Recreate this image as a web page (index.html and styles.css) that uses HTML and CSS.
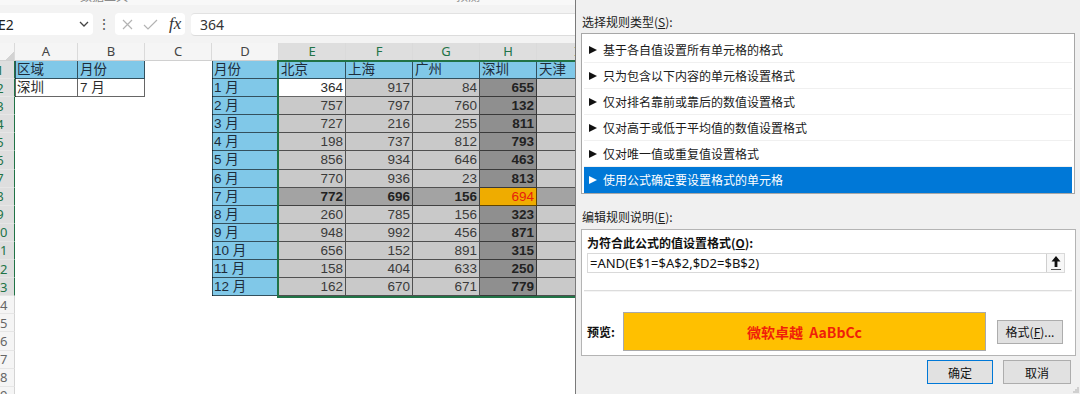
FILE: index.html
```html
<!DOCTYPE html>
<html>
<head>
	<meta charset="utf-8">
	<title>新建格式规则</title>
	<link rel="stylesheet" href="styles.css">
</head>
<body>
	<!-- Worksheet -->
	<div class="excel">
		<div class="ribbon"><span class="rb-a">数据工具</span><span class="rb-b">预测</span></div>

		<!-- Formula bar -->
		<div class="fbar">
			<div class="namebox">
				<span>E2</span>
				<svg width="10" height="6" viewBox="0 0 10 6"><polyline points="1,1 5,5 9,1" fill="none" stroke="#444" stroke-width="1.3"/></svg>
			</div>
			<div class="dots">⋮</div>
			<div class="fbtns">
				<svg width="11" height="11" viewBox="0 0 11 11"><path d="M1 1L10 10M10 1L1 10" stroke="#b3b3b3" stroke-width="1.2"/></svg>
				<svg width="15" height="11" viewBox="0 0 15 11"><polyline points="1,6 5,10 14,1" fill="none" stroke="#b3b3b3" stroke-width="1.2"/></svg>
				<span class="fx">fx</span>
			</div>
			<div class="finput">364</div>
		</div>

		<!-- Grid -->
		<div class="sheet">
			<div class="colhead">
				<div class="ch corner"></div>
				<div class="ch">A</div>
				<div class="ch">B</div>
				<div class="ch">C</div>
				<div class="ch">D</div>
				<div class="ch on">E</div>
				<div class="ch on">F</div>
				<div class="ch on">G</div>
				<div class="ch on">H</div>
				<div class="ch on">I</div>
			</div>

			<div class="row sel"><div class="rh"><span>1</span></div><div class="c t bl lt">区域</div><div class="c t bl">月份</div><div class="c"></div><div class="c t bl lt">月份</div><div class="c t bl">北京</div><div class="c t bl">上海</div><div class="c t bl">广州</div><div class="c t bl">深圳</div><div class="c t bl">天津</div></div>
			<div class="row sel"><div class="rh"><span>2</span></div><div class="c t w lt">深圳</div><div class="c t w">7 月</div><div class="c"></div><div class="c t bl lt">1 月</div><div class="c t w n">364</div><div class="c t g n">917</div><div class="c t g n">84</div><div class="c t hh n">655</div><div class="c t g"></div></div>
			<div class="row sel"><div class="rh"><span>3</span></div><div class="c t bl d">2 月</div><div class="c t g n">757</div><div class="c t g n">797</div><div class="c t g n">760</div><div class="c t hh n">132</div><div class="c t g"></div></div>
			<div class="row sel"><div class="rh"><span>4</span></div><div class="c t bl d">3 月</div><div class="c t g n">727</div><div class="c t g n">216</div><div class="c t g n">255</div><div class="c t hh n">811</div><div class="c t g"></div></div>
			<div class="row sel"><div class="rh"><span>5</span></div><div class="c t bl d">4 月</div><div class="c t g n">198</div><div class="c t g n">737</div><div class="c t g n">812</div><div class="c t hh n">793</div><div class="c t g"></div></div>
			<div class="row sel"><div class="rh"><span>6</span></div><div class="c t bl d">5 月</div><div class="c t g n">856</div><div class="c t g n">934</div><div class="c t g n">646</div><div class="c t hh n">463</div><div class="c t g"></div></div>
			<div class="row sel"><div class="rh"><span>7</span></div><div class="c t bl d">6 月</div><div class="c t g n">770</div><div class="c t g n">936</div><div class="c t g n">23</div><div class="c t hh n">813</div><div class="c t g"></div></div>
			<div class="row sel"><div class="rh"><span>8</span></div><div class="c t bl d">7 月</div><div class="c t b7 n">772</div><div class="c t b7 n">696</div><div class="c t b7 n">156</div><div class="c t hit n">694</div><div class="c t b7"></div></div>
			<div class="row sel"><div class="rh"><span>9</span></div><div class="c t bl d">8 月</div><div class="c t g n">260</div><div class="c t g n">785</div><div class="c t g n">156</div><div class="c t hh n">323</div><div class="c t g"></div></div>
			<div class="row sel"><div class="rh"><span>10</span></div><div class="c t bl d">9 月</div><div class="c t g n">948</div><div class="c t g n">992</div><div class="c t g n">456</div><div class="c t hh n">871</div><div class="c t g"></div></div>
			<div class="row sel"><div class="rh"><span>11</span></div><div class="c t bl d">10 月</div><div class="c t g n">656</div><div class="c t g n">152</div><div class="c t g n">891</div><div class="c t hh n">315</div><div class="c t g"></div></div>
			<div class="row sel"><div class="rh"><span>12</span></div><div class="c t bl d">11 月</div><div class="c t g n">158</div><div class="c t g n">404</div><div class="c t g n">633</div><div class="c t hh n">250</div><div class="c t g"></div></div>
			<div class="row sel"><div class="rh"><span>13</span></div><div class="c t bl d">12 月</div><div class="c t g n">162</div><div class="c t g n">670</div><div class="c t g n">671</div><div class="c t hh n">779</div><div class="c t g"></div></div>
			<div class="row"><div class="rh"><span>14</span></div></div>
			<div class="row"><div class="rh"><span>15</span></div></div>
			<div class="row"><div class="rh"><span>16</span></div></div>
			<div class="row"><div class="rh"><span>17</span></div></div>
			<div class="row"><div class="rh"><span>18</span></div></div>
			<div class="row"><div class="rh"><span>19</span></div></div>

			<!-- selected range E1:I13 -->
			<div class="selection"></div>
		</div>
	</div>

	<!-- Conditional format dialog -->
	<div class="dialog">
		<div class="lbl">选择规则类型(<u>S</u>):</div>
		<div class="rules">
			<div class="rule">基于各自值设置所有单元格的格式</div>
			<div class="rule">只为包含以下内容的单元格设置格式</div>
			<div class="rule">仅对排名靠前或靠后的数值设置格式</div>
			<div class="rule">仅对高于或低于平均值的数值设置格式</div>
			<div class="rule">仅对唯一值或重复值设置格式</div>
			<div class="rule on">使用公式确定要设置格式的单元格</div>
		</div>

		<div class="lbl lbl2">编辑规则说明(<u>E</u>):</div>
		<div class="desc">
			<div class="desc-title">为符合此公式的值设置格式(<u>O</u>):</div>
			<div class="formula">
				<span>=AND(E$1=$A$2,$D2=$B$2)</span>
				<div class="up">
					<svg width="12" height="16" viewBox="0 0 12 16"><path d="M6 1L1.5 6.5H4.6V12H7.4V6.5H10.5Z" fill="#111"/><rect x="1" y="14" width="10" height="1" fill="#555"/></svg>
				</div>
			</div>
			<div class="sep"></div>
			<div class="preview-row">
				<div class="pv-label">预览:</div>
				<div class="pv-box">微软卓越&nbsp;&nbsp;AaBbCc</div>
				<div class="btn fmt-btn">格式(<u>F</u>)...</div>
			</div>
		</div>

		<div class="actions">
			<div class="btn ok">确定</div>
			<div class="btn cancel">取消</div>
		</div>

		<svg class="grip" width="8" height="8" viewBox="0 0 8 8">
			<circle cx="7" cy="3" r="0.7" fill="#999"/>
			<circle cx="5" cy="5" r="0.7" fill="#999"/>
			<circle cx="7" cy="5" r="0.7" fill="#999"/>
			<circle cx="3" cy="7" r="0.7" fill="#999"/>
			<circle cx="5" cy="7" r="0.7" fill="#999"/>
			<circle cx="7" cy="7" r="0.7" fill="#999"/>
		</svg>
	</div>
</body>
</html>
```

FILE: styles.css
```css
* {
	box-sizing: border-box;
}

body {
	margin: 0;
	width: 1080px;
	height: 394px;
	overflow: hidden;
	display: flex;
	background-color: #fff;
	font-family: "Noto Sans", "Noto Sans CJK SC", sans-serif;
}

/* ---------- worksheet ---------- */

.excel {
	width: 575px;
	flex: none;
	overflow: hidden;
}

.ribbon {
	height: 5px;
	background-color: #f8f8f8;
	overflow: hidden;
	display: flex;
	padding-left: 80px;
	font-size: 12px;
	color: #8a8a8a;
}

.ribbon span {
	line-height: 12px;
	margin-top: -9px;
}

.ribbon .rb-b {
	margin-left: 328px;
}

.fbar {
	height: 38px;
	background-color: #f3f3f3;
	display: flex;
	align-items: flex-start;
	padding-top: 8px;
}

.namebox {
	width: 99px;
	height: 22px;
	margin-left: -6px;
	padding: 0 4px 0 4px;
	background-color: #fff;
	border-radius: 4px;
	display: flex;
	align-items: center;
	justify-content: space-between;
	font-size: 14px;
	color: #222;
}

.dots {
	width: 22px;
	height: 22px;
	line-height: 22px;
	text-align: center;
	font-size: 14px;
	color: #555;
}

.fbtns {
	width: 70px;
	height: 22px;
	background-color: #fff;
	border-radius: 4px;
	display: flex;
	align-items: center;
	padding-left: 7px;
	gap: 10px;
}

.fx {
	font-family: "Liberation Serif", serif;
	font-style: italic;
	font-size: 17px;
	color: #333;
	margin-left: 1px;
}

.finput {
	flex: 1;
	height: 23px;
	margin-left: 6px;
	padding-left: 9px;
	background-color: #fff;
	border-top: 1px solid #e2e2e2;
	border-bottom: 1px solid #dcdcdc;
	border-radius: 4px 0 0 4px;
	font-size: 14px;
	line-height: 21px;
	color: #333;
}

.sheet {
	position: relative;
}

.colhead,
.row {
	display: grid;
	grid-template-columns: 15px 63px 67px 67px 67px 67px 67px 67px 57px 80px;
}

.colhead {
	height: 18px;
}

.ch {
	background-color: #f5f5f5;
	border-right: 1px solid #dadada;
	border-bottom: 1px solid #d0d0d0;
	text-align: center;
	font-size: 13px;
	line-height: 17px;
	color: #444;
}

.ch.on {
	background-color: #dedede;
	color: #217346;
}

.corner {
	background: linear-gradient(135deg, #f5f5f5 60%, #d3d3d3 60%) no-repeat right bottom / 10px 10px, #f5f5f5;
}

.row {
	height: 18.1px;
}

.rh {
	display: flex;
	justify-content: flex-end;
	align-items: center;
	overflow: hidden;
	background-color: #f5f5f5;
	border-right: 1px solid #d4d4d4;
	border-bottom: 1px solid #e6e6e6;
	font-size: 13px;
	color: #666;
}

.rh span {
	flex: none;
	width: 28px;
	text-align: center;
}

.row.sel .rh {
	background-color: #dedede;
	color: #217346;
	border-right-color: #217346;
}

.c {
	font-family: "Liberation Sans", "Noto Sans CJK SC", sans-serif;
	font-size: 13.5px;
	line-height: 18px;
	padding-left: 2px;
	color: #2b2b2b;
	white-space: nowrap;
	overflow: hidden;
}

.t {
	box-shadow: inset -1px -1px 0 rgba(0, 0, 0, 0.6);
}

.lt,
.d {
	box-shadow: inset -1px -1px 0 rgba(0, 0, 0, 0.6), inset 1px 0 0 rgba(0, 0, 0, 0.6);
}

.d {
	grid-column-start: 5;
}

.n {
	text-align: right;
	padding: 0 3px 0 0;
}

.bl {
	background-color: #80c8e8;
	color: #1e2c3a;
}

.w {
	background-color: #fff;
}

.g {
	background-color: #c9c9c9;
	color: #3a3a3a;
}

.hh {
	background-color: #8f8f8f;
	font-weight: bold;
	color: #222;
}

.b7 {
	background-color: #a3a3a3;
	font-weight: bold;
	color: #222;
}

.hit {
	background-color: #efac00;
	color: #e8200c;
}

.selection {
	position: absolute;
	left: 277px;
	top: 17px;
	width: 400px;
	height: 238px;
	border: 2px solid #217346;
	pointer-events: none;
}

/* ---------- dialog ---------- */

.dialog {
	flex: 1;
	position: relative;
	background-color: #f0f0f0;
	border-left: 1px solid #7a7a7a;
	padding-top: 13px;
	font-family: "Noto Sans CJK SC", "Noto Sans", sans-serif;
	font-size: 12px;
	color: #000;
}

.lbl {
	margin-left: 6px;
	height: 18px;
	line-height: 18px;
	color: #222;
}

.lbl2 {
	margin-top: 14px;
}

.rules {
	margin: 2px 0 0 5px;
	width: 494px;
	height: 161px;
	padding: 3px 2px 0;
	background-color: #fff;
	border: 1px solid #a7a7a7;
}

.rule {
	height: 26px;
	display: flex;
	align-items: center;
	padding-left: 5px;
	border-bottom: 1px solid #f0f0f0;
	color: #1a1a1a;
}

.rule::before {
	content: "";
	width: 0;
	height: 0;
	border-left: 8px solid #111;
	border-top: 4.5px solid transparent;
	border-bottom: 4.5px solid transparent;
	margin-right: 6px;
}

.rule.on {
	background-color: #0078d7;
	color: #fff;
	border-bottom-color: #0078d7;
}

.rule.on::before {
	border-left-color: #fff;
}

.desc {
	margin: 3px 0 0 5px;
	width: 495px;
	height: 127px;
	padding: 4px 10px 0 5px;
	background-color: #fff;
	border: 1px solid #b4b4b4;
}

.desc-title {
	font-weight: bold;
	line-height: 18px;
	color: #111;
}

.formula {
	margin-top: 1px;
	height: 20px;
	border: 1px solid #d9d9d9;
	display: flex;
	align-items: center;
	justify-content: space-between;
	padding-left: 2px;
	font-family: "Noto Sans", "Noto Sans CJK SC", sans-serif;
	font-size: 13px;
	color: #111;
}

.up {
	width: 18px;
	height: 18px;
	background-color: #f7f7f7;
	border-left: 1px solid #cfcfcf;
	display: flex;
	align-items: center;
	justify-content: center;
}

.sep {
	margin: 17px -7px 0 -3px;
	height: 2px;
	border-top: 1px solid #dcdcdc;
	border-bottom: 1px solid #f4f4f4;
}

.preview-row {
	display: flex;
	align-items: center;
	margin-top: 20px;
}

.pv-label {
	width: 36px;
	font-weight: bold;
	color: #111;
}

.pv-box {
	width: 363px;
	height: 39px;
	background-color: #ffc000;
	border: 1px solid #a9a9a9;
	display: flex;
	align-items: center;
	justify-content: center;
	font-size: 14px;
	font-weight: bold;
	color: #f01e0a;
}

.btn {
	height: 24px;
	background-color: #e1e1e1;
	border: 1px solid #adadad;
	display: flex;
	align-items: center;
	justify-content: center;
	color: #111;
}

.fmt-btn {
	width: 66px;
	margin-left: 11px;
}

.actions {
	display: flex;
	justify-content: flex-end;
	gap: 10px;
	margin-top: 4px;
	padding-right: 9px;
}

.ok {
	width: 66px;
	border-color: #0078d7;
}

.cancel {
	width: 68px;
}

.grip {
	position: absolute;
	right: 1px;
	bottom: 1px;
}
```
